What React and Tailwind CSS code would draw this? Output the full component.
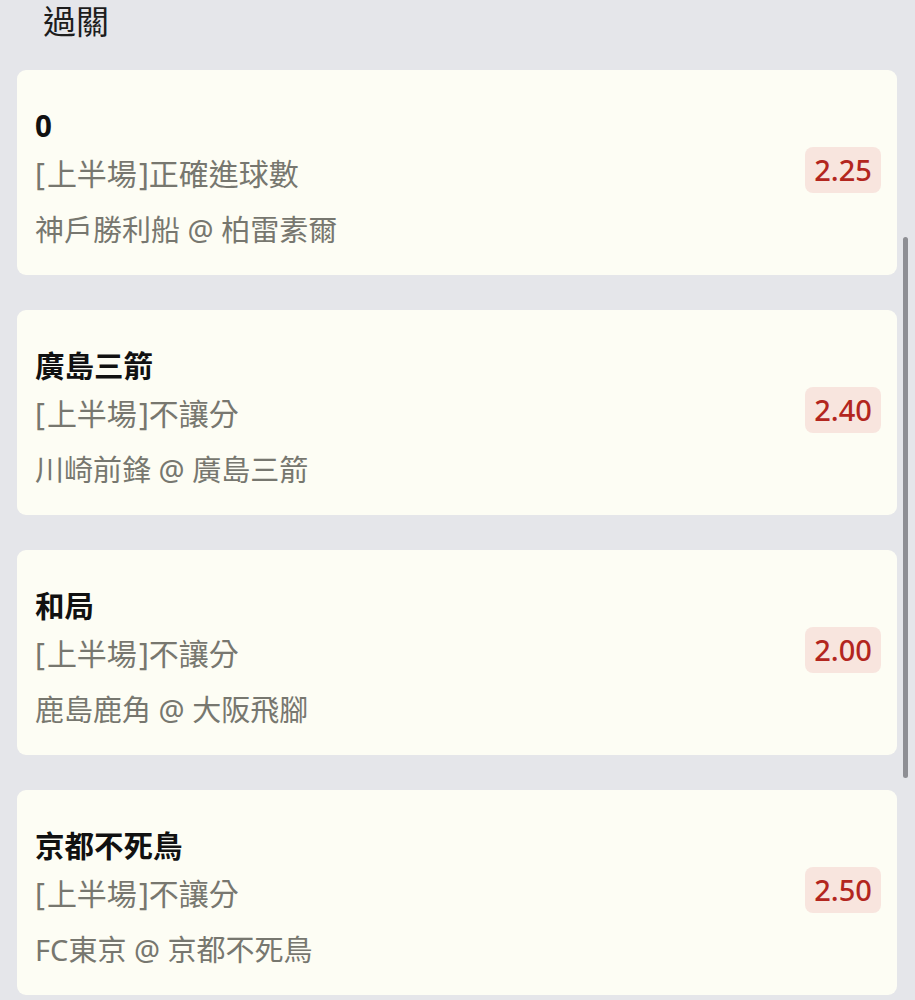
import React from 'react'

const bets = [
  { pick: '0', half: '上半場', market: '正確進球數', match: '神戶勝利船 @ 柏雷素爾', odds: '2.25' },
  { pick: '廣島三箭', half: '上半場', market: '不讓分', match: '川崎前鋒 @ 廣島三箭', odds: '2.40' },
  { pick: '和局', half: '上半場', market: '不讓分', match: '鹿島鹿角 @ 大阪飛腳', odds: '2.00' },
  { pick: '京都不死鳥', half: '上半場', market: '不讓分', match: 'FC東京 @ 京都不死鳥', odds: '2.50' },
]

function BetCard({ bet }) {
  return (
    <div className="flex items-center justify-between h-[205px] rounded-[9px] bg-[#fdfdf4] pl-[18px] pr-[16px]">
      <div className="flex flex-col self-start pt-[34px]">
        <div className="text-[29.5px] leading-[44px] font-bold text-[#111]">{bet.pick}</div>
        <div className="text-[30px] leading-[52px] text-[#77776f]">
          <span className="pr-[2px]">[</span>
          {bet.half}
          <span className="pl-[2px]">]</span>
          {bet.market}
        </div>
        <div className="text-[29px] leading-[60px] text-[#77776f]">{bet.match}</div>
      </div>
      <div className="mt-[-5px] flex items-center justify-center w-[76px] h-[46px] rounded-[8px] bg-[#f8e5de] text-[29px] font-medium text-[#b3261e]">
        {bet.odds}
      </div>
    </div>
  )
}

export default function App() {
  return (
    <div
      className="relative min-h-[1000px] bg-[#e5e6ea] pl-[17px] pr-[18px]"
      style={{ fontFamily: '"Noto Sans", "Noto Sans CJK TC", sans-serif' }}
    >
      <div className="h-[70px] pl-[26px] text-[33px] leading-[43px] text-[#1d1d1d]">過關</div>

      <div className="flex flex-col gap-[35px]">
        {bets.map((bet, i) => (
          <BetCard key={i} bet={bet} />
        ))}
      </div>

      {/* overlay scrollbar */}
      <div className="absolute left-[903px] top-[237px] w-[5px] h-[541px] rounded-full bg-[#8e8f94]" />
    </div>
  )
}
